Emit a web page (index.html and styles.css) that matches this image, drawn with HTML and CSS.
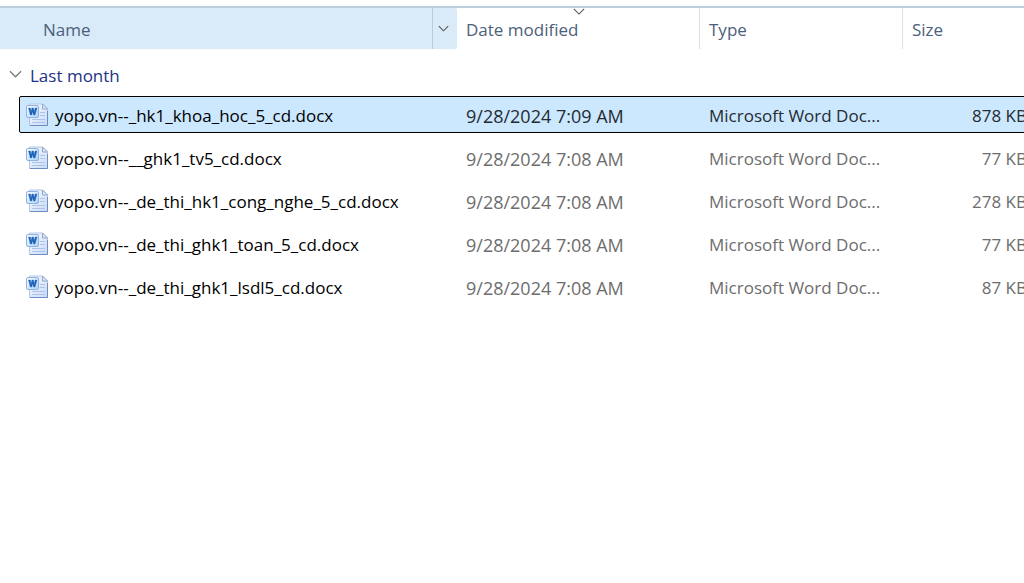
FILE: index.html
```html
<!DOCTYPE html>
<html lang="en">
<head>
<meta charset="utf-8">
<title>Files</title>
<link rel="stylesheet" href="styles.css">
</head>
<body>
<svg class="defs" aria-hidden="true">
  <defs>
    <linearGradient id="page" x1="0" y1="0" x2="1" y2="1">
      <stop offset="0" stop-color="#f8fbff"/><stop offset="1" stop-color="#c8daf7"/>
    </linearGradient>
    <linearGradient id="badge" x1="0" y1="0" x2="1" y2="1">
      <stop offset="0" stop-color="#ffffff"/><stop offset="1" stop-color="#a9d2fb"/>
    </linearGradient>
    <symbol id="doc" viewBox="0 0 24 24">
      <path d="M4.500 1H17.500L22.500 6V22.500H4.500Z" fill="url(#page)" stroke="#b4c6e2"/>
      <path d="M5 22.500H22.500V8" fill="none" stroke="#6f8cc2"/>
      <path d="M17.500 1V6H22.500Z" fill="#dce8f8" stroke="#93a8c8"/>
      <path d="M15 9.500H20M15 12.500H20M7 16.500H20M7 19.500H20" stroke="#adc4e8" fill="none"/>
      <rect x="1.500" y="2.500" width="12" height="12" rx="1.500" fill="url(#badge)" stroke="#8fb2e0"/>
      <path d="M3.500 5L5.300 12H6.700L7.600 8.500L8.600 12H10L12 5H10.200L9.200 9L8.400 5H6.900L6.100 9L5.300 5Z" fill="#1c63b8" stroke="#1c63b8" stroke-width=".4"/>
    </symbol>
    <symbol id="chevron" viewBox="0 0 14 8">
      <path d="M1 1L7 7L13 1" fill="none" stroke="currentColor" stroke-width="1.300"/>
    </symbol>
  </defs>
</svg>
<main class="files">
  <table class="list">
    <thead>
      <tr class="head">
        <th class="col col-name" scope="col"><span class="label">Name</span><button class="filter" type="button" aria-label="Filter by name"><svg class="chev-small"><use href="#chevron"/></svg></button></th>
        <th class="col" scope="col" aria-sort="descending">Date modified<svg class="sort"><use href="#chevron"/></svg></th>
        <th class="col" scope="col">Type</th>
        <th class="col" scope="col">Size</th>
      </tr>
    </thead>
    <tbody>
      <tr class="group"><th scope="rowgroup"><button class="toggle" type="button" aria-expanded="true"><svg class="chev"><use href="#chevron"/></svg>Last month</button></th></tr>
      <tr class="row selected"><td class="name"><svg class="icon"><use href="#doc"/></svg>yopo.vn--_hk1_khoa_hoc_5_cd.docx</td><td class="date">9/28/2024 7:09 AM</td><td>Microsoft Word Doc...</td><td class="size">878 KB</td></tr>
      <tr class="row"><td class="name"><svg class="icon"><use href="#doc"/></svg>yopo.vn--__ghk1_tv5_cd.docx</td><td class="date">9/28/2024 7:08 AM</td><td>Microsoft Word Doc...</td><td class="size">77 KB</td></tr>
      <tr class="row"><td class="name"><svg class="icon"><use href="#doc"/></svg>yopo.vn--_de_thi_hk1_cong_nghe_5_cd.docx</td><td class="date">9/28/2024 7:08 AM</td><td>Microsoft Word Doc...</td><td class="size">278 KB</td></tr>
      <tr class="row"><td class="name"><svg class="icon"><use href="#doc"/></svg>yopo.vn--_de_thi_ghk1_toan_5_cd.docx</td><td class="date">9/28/2024 7:08 AM</td><td>Microsoft Word Doc...</td><td class="size">77 KB</td></tr>
      <tr class="row"><td class="name"><svg class="icon"><use href="#doc"/></svg>yopo.vn--_de_thi_ghk1_lsdl5_cd.docx</td><td class="date">9/28/2024 7:08 AM</td><td>Microsoft Word Doc...</td><td class="size">87 KB</td></tr>
    </tbody>
  </table>
</main>
</body>
</html>
```
FILE: styles.css
```css
* { box-sizing: border-box; }

body {
  margin: 0;
  background: #fff;
  color: #6d6d6d;
  font: 17px/24px "Segoe UI", "Open Sans", "Noto Sans", sans-serif;
}

button {
  border: 0;
  padding: 0;
  background: none;
  color: inherit;
  font: inherit;
}

.defs { position: absolute; width: 0; height: 0; }

.files { padding-top: 6px; overflow: hidden; }

/* The size column runs slightly past the pane's right edge. */
.list {
  display: block;
  width: calc(100% + 4px);
  border-top: 2px solid #bccddb;
}

.list thead, .list tbody { display: block; }

.list th, .list td {
  padding: 0;
  font-weight: 400;
  text-align: left;
  white-space: nowrap;
}

.head {
  display: grid;
  grid-template-columns: 457px 243px 203px 1fr;
  color: #4c607a;
}

.list .col {
  position: relative;
  padding: 10px 9px 7px;
  border-right: 1px solid #e0e0e0;
}

.list .col:last-child { border-right: 0; }

.list .col-name {
  display: flex;
  padding: 0;
  border-right: 0;
  border-radius: 0 2px 2px 0;
  background: #d9ebf9;
}

.label { flex: 1; padding: 10px 0 7px 43px; }

.filter {
  display: flex;
  align-items: center;
  justify-content: center;
  width: 25px;
  padding-right: 4px;
  border-left: 1px solid #b8cddd;
  color: #555;
}

.chev-small { width: 11px; height: 7px; }

.sort {
  position: absolute;
  top: 0;
  left: calc(50% - 5px);
  width: 12px;
  height: 7px;
  color: #555;
}

.group { display: block; padding: 15px 0 8px 9px; }
.group th { display: block; }

.toggle {
  display: flex;
  align-items: center;
  gap: 8px;
  color: #1e3287;
}

.chev { width: 13px; height: 8px; margin-bottom: 4px; color: #777; }

.row {
  display: grid;
  grid-template-columns: 437px 243px 203px 1fr;
  align-items: center;
  height: 37px;
  margin: 0 0 6px 19px;
  border: 1px solid transparent;
  border-radius: 2px;
}

.list .row td { padding: 3px 9px 0; }

.list .row .name {
  display: flex;
  align-items: center;
  gap: 6px;
  padding: 3px 0 0 5px;
  color: #000;
}

.list .row .date { font-size: 18px; }

.list .row .size { padding-right: 0; text-align: right; }

.icon { flex: none; width: 24px; height: 24px; margin-bottom: 2px; }

.selected {
  border-color: #000;
  background: #cce8ff;
  color: #252b31;
}
```
